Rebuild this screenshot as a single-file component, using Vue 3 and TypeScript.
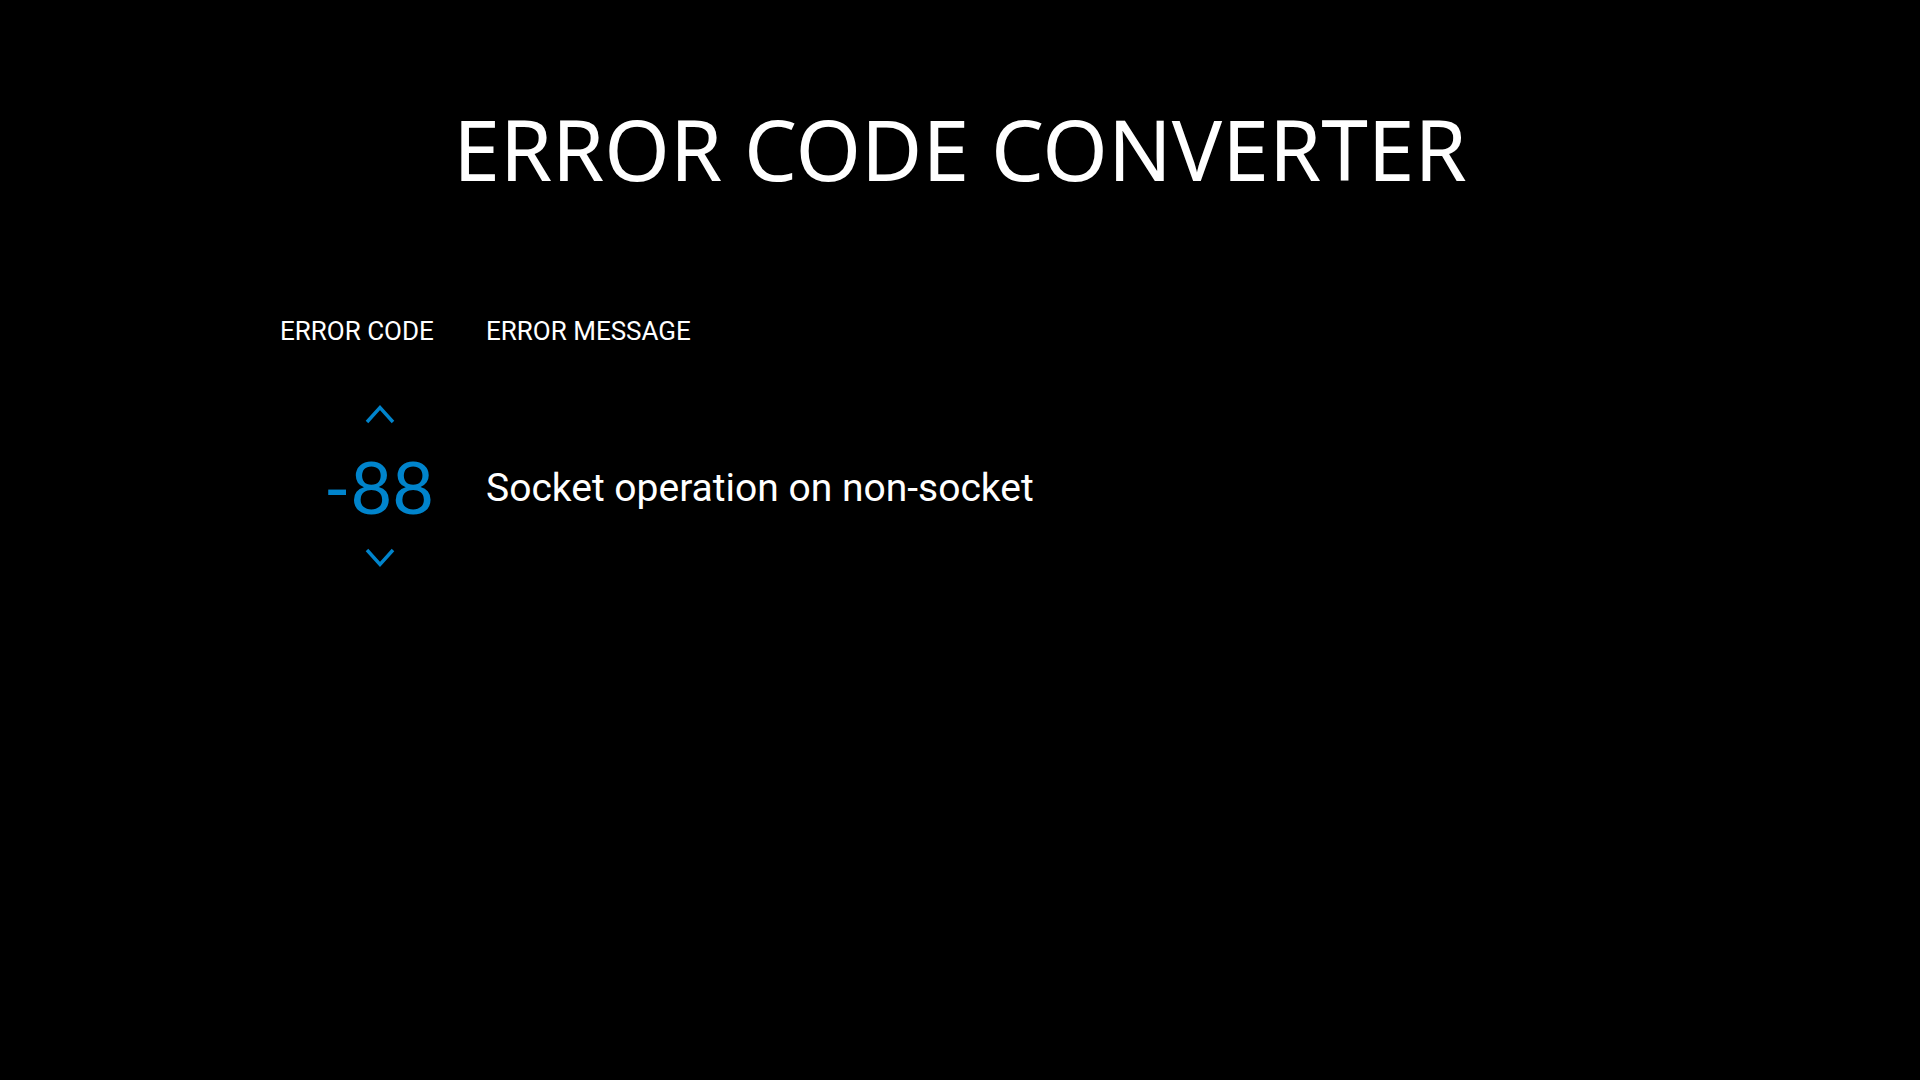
<script setup lang="ts">
import { computed, ref } from 'vue'

const messages: Record<number, string> = {
  87: 'Too many users',
  88: 'Socket operation on non-socket',
  89: 'Destination address required',
}

const code = ref(-88)
const message = computed(() => messages[Math.abs(code.value)] ?? 'Unknown error')
</script>

<template>
  <main class="page">
    <h1 class="title">ERROR CODE CONVERTER</h1>
    <div class="converter">
      <section class="code-column">
        <label class="heading" for="code">ERROR CODE</label>
        <div class="stepper">
          <button class="step" type="button" aria-label="Next code" @click="code++">
            <svg width="30" height="20" viewBox="0 0 30 20"><path d="M2 18 15 3.5 28 18" /></svg>
          </button>
          <input id="code" v-model.number="code" class="code" type="text" />
          <button class="step" type="button" aria-label="Previous code" @click="code--">
            <svg width="30" height="20" viewBox="0 0 30 20"><path d="M2 2 15 16.5 28 2" /></svg>
          </button>
        </div>
      </section>
      <section class="message-column">
        <h2 class="heading">ERROR MESSAGE</h2>
        <p class="message">{{ message }}</p>
      </section>
    </div>
  </main>
</template>

<style>
body {
  background: #000;
}
</style>

<style scoped>
.page {
  padding: 95px 280px;
  color: #fff;
  font-family: Roboto, "Noto Sans", sans-serif;
}
.title {
  margin: 0;
  font-family: "Noto Sans", "Open Sans", sans-serif;
  font-size: 84px;
  line-height: 108px;
  font-weight: 400;
  text-align: center;
  white-space: nowrap;
}
.converter {
  display: flex;
  gap: 52px;
  margin-top: 108px;
}
.code-column {
  width: 154px;
}
.heading {
  display: block;
  margin: 0;
  font-size: 26px;
  line-height: 40px;
  font-weight: 400;
  white-space: nowrap;
}
.stepper {
  display: flex;
  flex-direction: column;
  align-items: flex-end;
  margin-top: 53px;
}
.step {
  display: flex;
  justify-content: center;
  width: 108px;
  padding: 0;
  border: 0;
  background: none;
  cursor: pointer;
}
.step path {
  fill: none;
  stroke: #0084cc;
  stroke-width: 3.4;
}
.code {
  width: 154px;
  height: 124px;
  padding: 0;
  border: 0;
  outline: 0;
  background: none;
  color: #0084cc;
  font-family: Lato, "Noto Sans", sans-serif;
  font-size: 72px;
  text-align: right;
}
.message {
  margin: 109px 0 0;
  font-size: 39px;
  line-height: 56px;
}
</style>
